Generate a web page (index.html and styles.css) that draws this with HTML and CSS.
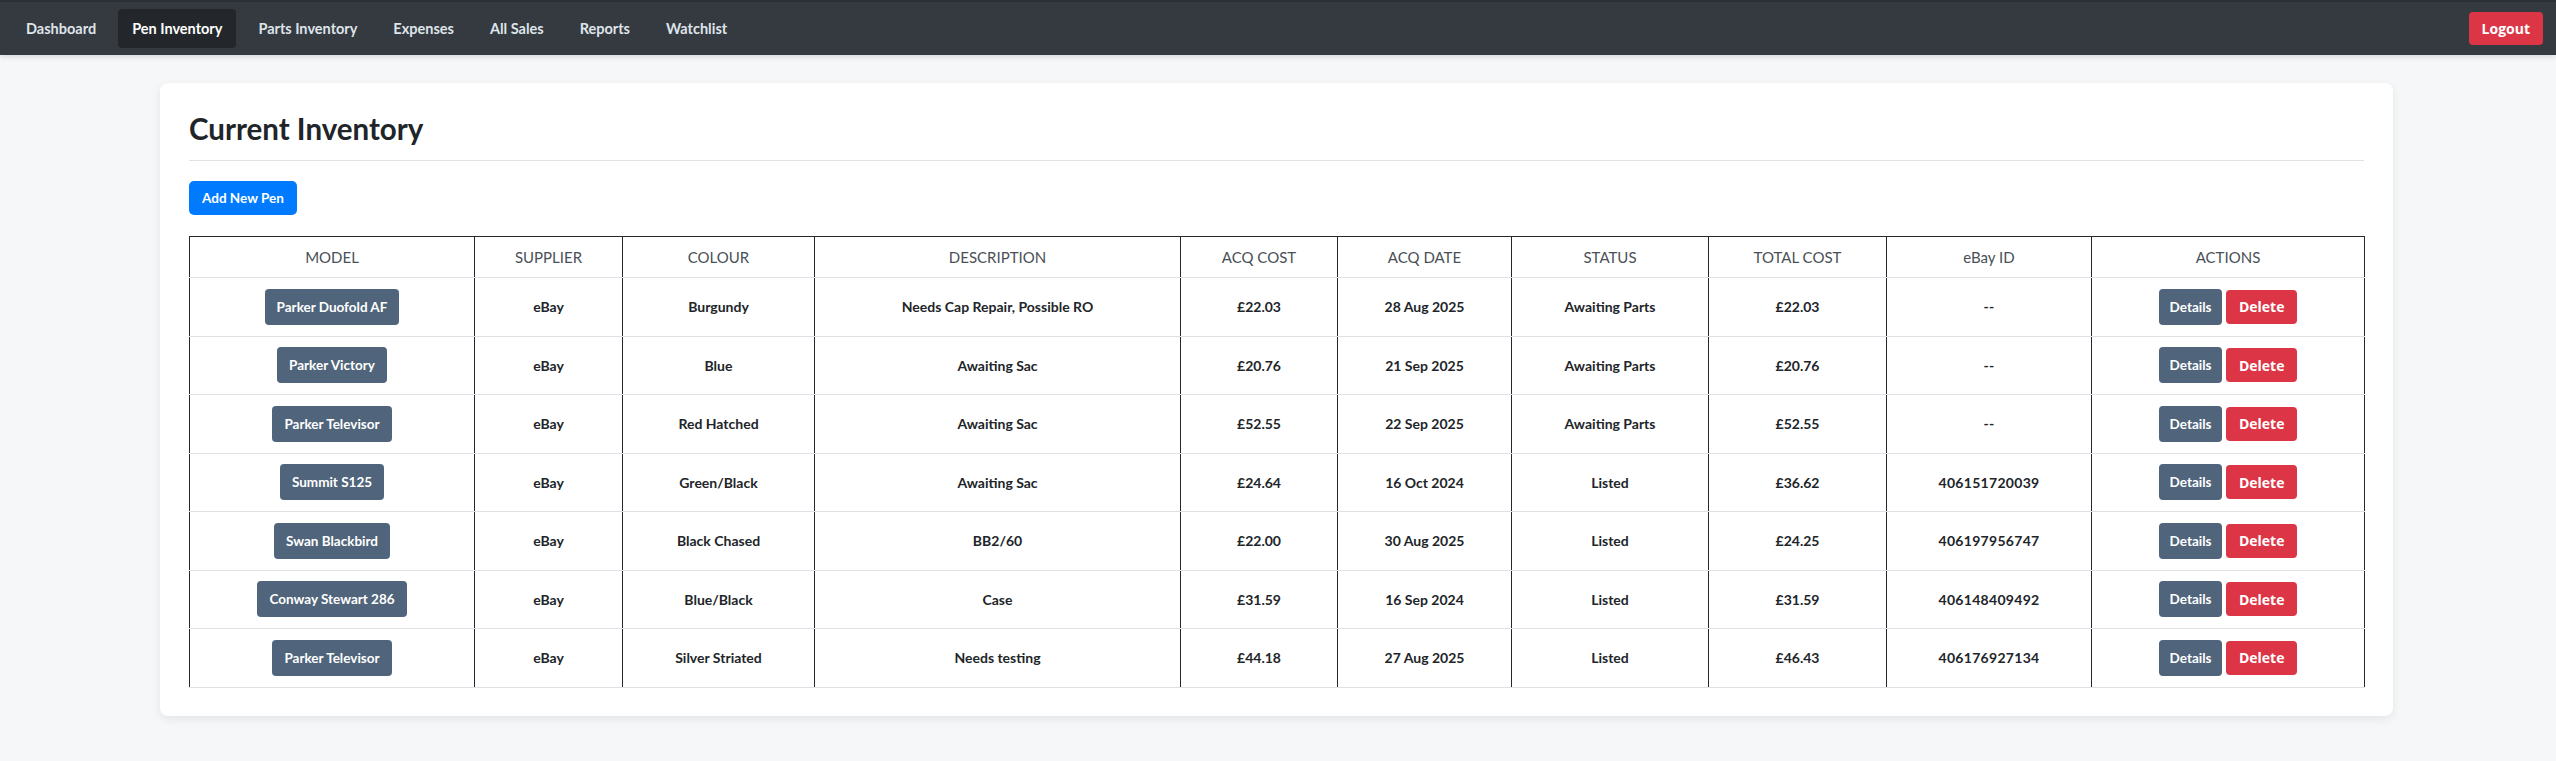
FILE: index.html
```html
<!DOCTYPE html>
<html lang="en">
<head>
<meta charset="utf-8">
<title>Pen Inventory</title>
<link rel="stylesheet" href="styles.css">
</head>
<body>
<nav class="navbar">
  <ul class="nav-links">
    <li><a class="nav-link" href="#">Dashboard</a></li>
    <li><a class="nav-link active" href="#">Pen Inventory</a></li>
    <li><a class="nav-link" href="#">Parts Inventory</a></li>
    <li><a class="nav-link" href="#">Expenses</a></li>
    <li><a class="nav-link" href="#">All Sales</a></li>
    <li><a class="nav-link" href="#">Reports</a></li>
    <li><a class="nav-link" href="#">Watchlist</a></li>
  </ul>
  <button class="btn-logout" type="button">Logout</button>
</nav>

<main class="main">
  <section class="card">
    <h2 class="card-title">Current Inventory</h2>
    <div class="toolbar">
      <a class="btn-add" href="#">Add New Pen</a>
    </div>
    <table class="inv-table">
      <colgroup>
        <col class="c-model"><col class="c-supplier"><col class="c-colour"><col class="c-desc"><col class="c-cost">
        <col class="c-date"><col class="c-status"><col class="c-total"><col class="c-ebay"><col class="c-actions">
      </colgroup>
      <thead>
        <tr>
          <th>MODEL</th><th>SUPPLIER</th><th>COLOUR</th><th>DESCRIPTION</th><th>ACQ COST</th>
          <th>ACQ DATE</th><th>STATUS</th><th>TOTAL COST</th><th>eBay ID</th><th>ACTIONS</th>
        </tr>
      </thead>
      <tbody>
        <tr>
          <td><a class="btn-model" href="#">Parker Duofold AF</a></td><td>eBay</td><td>Burgundy</td><td>Needs Cap Repair, Possible RO</td><td>£22.03</td>
          <td>28 Aug 2025</td><td>Awaiting Parts</td><td>£22.03</td><td class="ebay">--</td>
          <td><a class="btn-details" href="#">Details</a> <button class="btn-delete" type="button">Delete</button></td>
        </tr>
        <tr>
          <td><a class="btn-model" href="#">Parker Victory</a></td><td>eBay</td><td>Blue</td><td>Awaiting Sac</td><td>£20.76</td>
          <td>21 Sep 2025</td><td>Awaiting Parts</td><td>£20.76</td><td class="ebay">--</td>
          <td><a class="btn-details" href="#">Details</a> <button class="btn-delete" type="button">Delete</button></td>
        </tr>
        <tr>
          <td><a class="btn-model" href="#">Parker Televisor</a></td><td>eBay</td><td>Red Hatched</td><td>Awaiting Sac</td><td>£52.55</td>
          <td>22 Sep 2025</td><td>Awaiting Parts</td><td>£52.55</td><td class="ebay">--</td>
          <td><a class="btn-details" href="#">Details</a> <button class="btn-delete" type="button">Delete</button></td>
        </tr>
        <tr>
          <td><a class="btn-model" href="#">Summit S125</a></td><td>eBay</td><td>Green/Black</td><td>Awaiting Sac</td><td>£24.64</td>
          <td>16 Oct 2024</td><td>Listed</td><td>£36.62</td><td class="ebay">406151720039</td>
          <td><a class="btn-details" href="#">Details</a> <button class="btn-delete" type="button">Delete</button></td>
        </tr>
        <tr>
          <td><a class="btn-model" href="#">Swan Blackbird</a></td><td>eBay</td><td>Black Chased</td><td>BB2/60</td><td>£22.00</td>
          <td>30 Aug 2025</td><td>Listed</td><td>£24.25</td><td class="ebay">406197956747</td>
          <td><a class="btn-details" href="#">Details</a> <button class="btn-delete" type="button">Delete</button></td>
        </tr>
        <tr>
          <td><a class="btn-model" href="#">Conway Stewart 286</a></td><td>eBay</td><td>Blue/Black</td><td>Case</td><td>£31.59</td>
          <td>16 Sep 2024</td><td>Listed</td><td>£31.59</td><td class="ebay">406148409492</td>
          <td><a class="btn-details" href="#">Details</a> <button class="btn-delete" type="button">Delete</button></td>
        </tr>
        <tr>
          <td><a class="btn-model" href="#">Parker Televisor</a></td><td>eBay</td><td>Silver Striated</td><td>Needs testing</td><td>£44.18</td>
          <td>27 Aug 2025</td><td>Listed</td><td>£46.43</td><td class="ebay">406176927134</td>
          <td><a class="btn-details" href="#">Details</a> <button class="btn-delete" type="button">Delete</button></td>
        </tr>
      </tbody>
    </table>
  </section>
</main>
</body>
</html>
```

FILE: styles.css
```css
* { box-sizing: border-box; }

html, body {
  margin: 0;
  padding: 0;
}

body {
  background: #f6f7f9;
  font-family: Lato, "Open Sans", "Liberation Sans", sans-serif;
  color: #212529;
}

/* ---------- navbar ---------- */
.navbar {
  height: 55px;
  background: #343a40;
  border-top: 2px solid #2c3035;
  box-shadow: 0 2px 5px rgba(0, 0, 0, 0.12);
  display: flex;
  align-items: center;
  justify-content: space-between;
  padding: 0 13px 0 12px;
}

.nav-links {
  list-style: none;
  margin: 0;
  padding: 0;
  display: flex;
  gap: 8px;
}

.nav-link {
  display: block;
  height: 39px;
  line-height: 39px;
  padding: 0 14px;
  border-radius: 4px;
  color: #dfe4ea;
  text-decoration: none;
  font-size: 14.5px;
  font-weight: 700;
}

.nav-link.active {
  background: #23272b;
  color: #ffffff;
}

.btn-logout {
  height: 33px;
  padding: 0 13px;
  border: none;
  border-radius: 4px;
  background: #dc3545;
  color: #ffffff;
  font-family: "Open Sans", "Liberation Sans", sans-serif;
  font-size: 14px;
  font-weight: 700;
}

/* ---------- main card ---------- */
.main {
  padding: 28px 163px 28px 160px;
}

.card {
  background: #ffffff;
  border-radius: 8px;
  box-shadow: 0 3px 10px rgba(0, 0, 0, 0.08);
  padding: 28px 29px 28px;
}

.card-title {
  margin: 0;
  padding-bottom: 13px;
  border-bottom: 1px solid #dfe2e6;
  font-size: 29.5px;
  font-weight: 700;
  line-height: 36px;
  color: #212529;
}

.toolbar {
  padding: 20px 0 21px;
}

.btn-add {
  display: inline-block;
  height: 34px;
  line-height: 34px;
  padding: 0 13px;
  border-radius: 5px;
  background: #007bff;
  color: #ffffff;
  text-decoration: none;
  font-size: 13.5px;
  font-weight: 700;
}

/* ---------- table ---------- */
.inv-table {
  width: 100%;
  border-collapse: collapse;
  table-layout: fixed;
}

.c-model { width: 285px; }
.c-supplier { width: 148px; }
.c-colour { width: 192px; }
.c-desc { width: 366px; }
.c-cost { width: 157px; }
.c-date { width: 174px; }
.c-status { width: 197px; }
.c-total { width: 178px; }
.c-ebay { width: 205px; }
.c-actions { width: 273px; }

.inv-table th,
.inv-table td {
  border-left: 1px solid #25292d;
  border-right: 1px solid #25292d;
  border-bottom: 1px solid #dee2e6;
  text-align: center;
  vertical-align: middle;
}

.inv-table thead th {
  border-top: 1px solid #25292d;
  height: 41px;
  font-size: 15px;
  font-weight: 400;
  color: #495057;
}

.inv-table td {
  height: 58.5px;
  font-size: 14px;
  font-weight: 700;
  color: #212529;
}

.inv-table td.ebay {
  letter-spacing: 0.3px;
}

.btn-model,
.btn-details {
  display: inline-block;
  height: 36px;
  line-height: 36px;
  padding: 0 12px;
  border-radius: 4px;
  background: #50657b;
  color: #ffffff;
  text-decoration: none;
  font-size: 13.5px;
  font-weight: 700;
  vertical-align: middle;
}

.btn-details {
  padding: 0 11px;
}

.btn-delete {
  height: 34px;
  padding: 0 13px;
  border: none;
  border-radius: 4px;
  background: #dc3545;
  color: #ffffff;
  font-family: "Open Sans", "Liberation Sans", sans-serif;
  font-size: 14px;
  font-weight: 700;
  vertical-align: middle;
}
```
